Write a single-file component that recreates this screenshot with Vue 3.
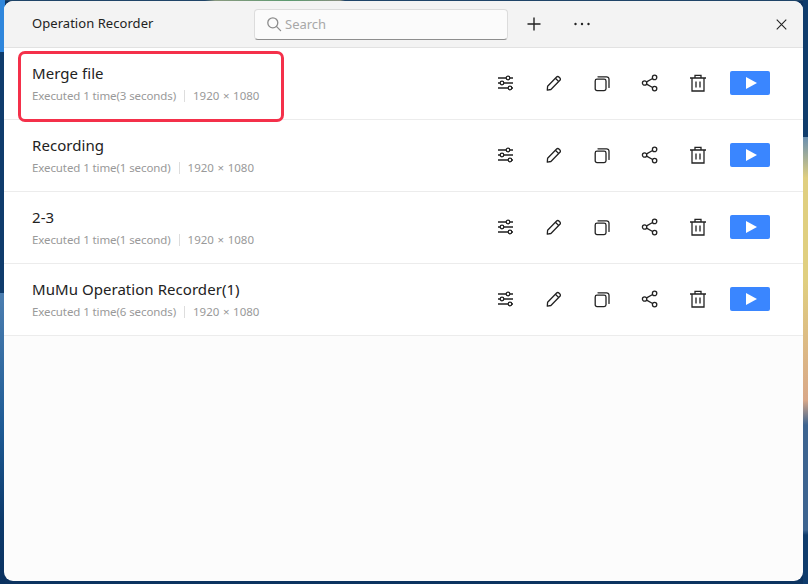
<script setup>
const rows = [
  { name: 'Merge file', run: 'Executed 1 time(3 seconds)' },
  { name: 'Recording', run: 'Executed 1 time(1 second)' },
  { name: '2-3', run: 'Executed 1 time(1 second)' },
  { name: 'MuMu Operation Recorder(1)', run: 'Executed 1 time(6 seconds)' },
]
</script>

<template>
  <div class="desktop">
    <div class="window">
      <header class="bar">
        <div class="title">Operation Recorder</div>
        <div class="search">
          <svg width="16" height="16" viewBox="0 0 16 16" fill="none" stroke="#8c8c8c" stroke-width="1.3">
            <circle cx="6.8" cy="6.8" r="5" />
            <path d="M10.4 10.4 14.6 14.6" stroke-linecap="round" />
          </svg>
          <span>Search</span>
        </div>
        <button class="tool plus">
          <svg width="14" height="14" viewBox="0 0 14 14" stroke="#222" stroke-width="1.4">
            <path d="M7 .5v13M.5 7h13" />
          </svg>
        </button>
        <button class="tool more">
          <svg width="16" height="4" viewBox="0 0 16 4" fill="#222">
            <circle cx="1.5" cy="2" r="1.2" /><circle cx="8" cy="2" r="1.2" /><circle cx="14.5" cy="2" r="1.2" />
          </svg>
        </button>
        <button class="tool close">
          <svg width="11" height="11" viewBox="0 0 12 12" stroke="#222" stroke-width="1.2">
            <path d="M.8.8l10.4 10.4M11.2.8.8 11.2" />
          </svg>
        </button>
      </header>
      <div class="list">
        <div v-for="row in rows" :key="row.name" class="row">
          <div class="info">
            <div class="name">{{ row.name }}</div>
            <div class="meta">
              <span>{{ row.run }}</span>
              <i class="sep"></i>
              <span class="res">1920 × 1080</span>
            </div>
          </div>
          <div class="actions">
            <svg class="ic" viewBox="0 0 18 18" fill="none" stroke="#222" stroke-width="1.3">
              <path d="M1 4h8.2M12.8 4h3.2M1 9h2.2M6.8 9h9.2M1 14h10.2M14.8 14h1.2" />
              <circle cx="11" cy="4" r="1.8" /><circle cx="5" cy="9" r="1.8" /><circle cx="13" cy="14" r="1.8" />
            </svg>
            <svg class="ic" viewBox="0 0 18 18" fill="none" stroke="#222" stroke-width="1.3" stroke-linejoin="round">
              <path d="M2.6 12.2 11.6 3a1.6 1.6 0 0 1 2.3 0l1 1a1.6 1.6 0 0 1 0 2.3L5.9 15.5l-3.6.6zM10.4 4.2l3.4 3.4" />
            </svg>
            <svg class="ic" viewBox="0 0 18 18" fill="none" stroke="#222" stroke-width="1.3" stroke-linejoin="round">
              <rect x="2.2" y="5.2" width="10.8" height="11.4" rx="1.8" />
              <path d="M5 2.8h8.6a2.4 2.4 0 0 1 2.4 2.4v8.2" stroke-linecap="round" />
            </svg>
            <svg class="ic" viewBox="0 0 18 18" fill="none" stroke="#222" stroke-width="1.3">
              <circle cx="3.6" cy="9" r="2.2" /><circle cx="13.6" cy="3.4" r="2.2" /><circle cx="13.6" cy="14.6" r="2.2" />
              <path d="M5.6 7.9l6-3.4M5.6 10.1l6 3.4" />
            </svg>
            <svg class="ic" viewBox="0 0 18 18" fill="none" stroke="#222" stroke-width="1.3">
              <path d="M1 4h16M6 4V1.4h6V4M3 4v13h12V4M7 7.5v6M11 7.5v6" />
            </svg>
            <button class="play">
              <svg width="11" height="12" viewBox="0 0 11 12" fill="#fff"><path d="M0 0 11 6 0 12z" /></svg>
            </button>
          </div>
        </div>
      </div>
      <div class="mark"></div>
    </div>
  </div>
</template>

<style>
html, body { margin: 0; height: 100%; overflow: hidden; }
</style>

<style scoped>
.desktop {
  width: 808px;
  height: 584px;
  box-sizing: border-box;
  padding: 1px 5px 3px 4px;
  background:
    linear-gradient(180deg, #2f86dc 0, #2f86dc 52px, #0f3c6c 52px, #0f3c6c 293px, #4c7eb0 293px, #1d5a94 430px, #0d3a6b 520px, #0a3260 584px) left top / 5px 100% no-repeat,
    linear-gradient(180deg, #0f3c6c 0, #0f3c6c 137px, #6a8fb0 137px, #e0cf80 178px, #e0cf80 280px, #d9a888 400px, #3d6490 425px, #3d6490 530px, #0f3c6c 535px, #0f3c6c 584px) right top / 5px 100% no-repeat,
    linear-gradient(90deg, #1f4468 0, #1f4468 205px, #8a9a80 215px, #5c9a70 290px, #8a8f80 340px, #1f4468 345px) left top / 100% 1px no-repeat,
    #0c3360;
  font-family: "Noto Sans", "Open Sans", sans-serif;
}
.window {
  position: relative;
  height: 100%;
  border-radius: 9px;
  overflow: hidden;
  background: #fcfcfc;
}
.bar {
  height: 47px;
  box-sizing: border-box;
  display: flex;
  align-items: center;
  background: #f3f3f3;
  border-bottom: 1px solid #e2e2e2;
}
.title {
  width: 250px;
  padding-left: 28px;
  padding-bottom: 2px;
  box-sizing: border-box;
  font-size: 13px;
  letter-spacing: 0.05px;
  color: #222;
}
.search {
  width: 254px;
  height: 31px;
  box-sizing: border-box;
  display: flex;
  align-items: center;
  gap: 3px;
  padding-left: 11px;
  background: #fbfbfb;
  border: 1px solid #dcdcdc;
  border-bottom-color: #8e8e8e;
  border-radius: 4px;
  color: #a8a8a8;
  font-size: 13px;
}
.tool {
  border: 0;
  padding: 0;
  background: none;
  display: flex;
  align-items: center;
  justify-content: center;
}
.plus { margin-left: 19px; }
.more { margin-left: 33px; }
.close { margin-left: auto; margin-right: 16px; }
.row {
  height: 72px;
  box-sizing: border-box;
  display: flex;
  align-items: center;
  justify-content: space-between;
  padding: 0 33px 1px 28px;
  background: #fff;
  border-bottom: 1px solid #ececec;
}
.name {
  font-size: 15px;
  letter-spacing: 0.05px;
  line-height: 20px;
  color: #222;
}
.meta {
  display: flex;
  align-items: center;
  margin-top: 5px;
  font-size: 11.5px;
  letter-spacing: -0.1px;
  line-height: 16px;
  color: #999;
}
.res {
  letter-spacing: 0;
  word-spacing: 0.6px;
}
.sep {
  width: 1px;
  height: 12px;
  margin: 0 8px;
  background: #ddd;
}
.actions {
  display: flex;
  align-items: center;
  gap: 30px;
}
.ic { width: 18px; height: 18px; }
.play {
  width: 40px;
  height: 24px;
  margin-left: -7px;
  border: 0;
  padding: 0 0 0 3px;
  border-radius: 2px;
  background: #3a86ff;
  display: flex;
  align-items: center;
  justify-content: center;
}
.mark {
  position: absolute;
  left: 14px;
  top: 50px;
  width: 266px;
  height: 71px;
  box-sizing: border-box;
  border: 3px solid #f4304a;
  border-radius: 7px;
}
</style>
